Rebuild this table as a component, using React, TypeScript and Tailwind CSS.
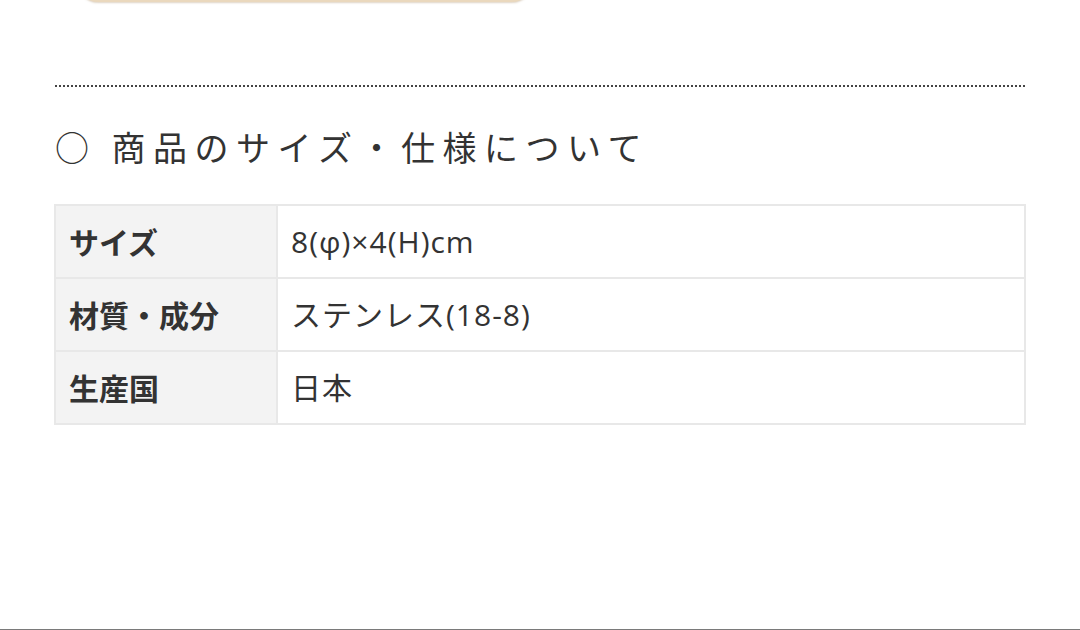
const specs = [
  { label: "サイズ", value: "8(φ)×4(H)cm" },
  { label: "材質・成分", value: "ステンレス(18-8)" },
  { label: "生産国", value: "日本" },
];

export default function App() {
  return (
    <div
      className="h-[630px] w-[1080px] bg-white flex flex-col overflow-hidden text-[#333]"
      style={{ fontFamily: '"Noto Sans CJK JP", "Noto Sans", sans-serif' }}
    >
      {/* bottom edge of the button above */}
      <div className="mx-[78px] w-[454px] h-[40px] -mt-[38px] rounded-full bg-[#ead8bd] shadow-[0_1px_2px_rgba(160,130,90,0.35)]" />

      <div className="mx-[55px] mt-[83px] border-t-2 border-dotted border-[#444]" />

      <h2 className="mx-[55px] mt-[34px] text-[34px] leading-[52px] tracking-[7.5px] font-normal">
        ○ 商品のサイズ・仕様について
      </h2>

      <table className="mx-[54px] mt-[31px] w-[972px] border-collapse border-2 border-[#e8e8e8]">
        <tbody>
          {specs.map((row) => (
            <tr key={row.label} className="h-[73px]">
              <th className="w-[222px] bg-[#f3f3f3] border-2 border-[#e8e8e8] pl-[13px] text-left text-[30px] font-bold">
                {row.label}
              </th>
              <td className="border-2 border-[#e8e8e8] pl-[13px] text-[30px] tracking-[1px] font-[Open_Sans,'Noto_Sans_CJK_JP',sans-serif]">
                {row.value}
              </td>
            </tr>
          ))}
        </tbody>
      </table>

      <div className="flex-1" />
      <div className="h-px bg-[#7a7a7a]" />
    </div>
  );
}
